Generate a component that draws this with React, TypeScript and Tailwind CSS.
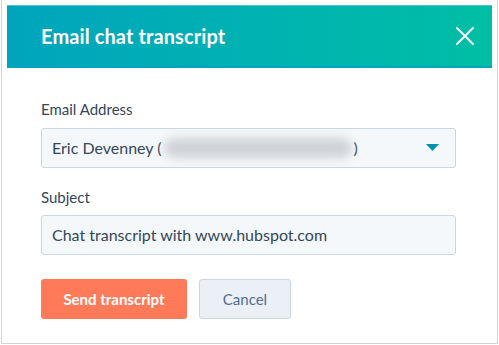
import { X } from 'lucide-react'

const font = { fontFamily: 'Lato, "Open Sans", sans-serif' }

function Caret() {
  return (
    <svg width="13" height="7" viewBox="0 0 13 7" className="text-[#0091ae]">
      <path d="M0 0h13L6.5 7z" fill="currentColor" />
    </svg>
  )
}

export default function App() {
  return (
    <div className="h-[345px] w-[499px] bg-white" style={font}>
      <div className="ml-px h-[344px] w-[497px] border-x border-b border-[#d3d3d3] px-[5px] pt-[5px]">
        <header className="flex h-[63px] items-center justify-between border-t border-[#4fc3d3] border-b-2 border-b-[#00a4bd] bg-gradient-to-r from-[#00a5bd] to-[#00bea5] pl-[34px] pr-[11px] text-white">
          <h1 className="text-[20px] font-bold tracking-[0.1px]">Email chat transcript</h1>
          <X size={32} strokeWidth={1.4} />
        </header>

        <div className="px-[34px] pt-[30px]">
          <label className="block text-[15px] text-[#33475b]">Email Address</label>
          <div className="mt-[7px] flex h-[40px] w-[415px] items-center justify-between rounded-[3px] border border-[#cbd6e2] bg-[#f5f8fa] pl-[10px] pr-[16px] text-[16px] text-[#33475b]">
            <span className="flex items-center">
              Eric Devenney (
              <span className="mx-[2px] h-[20px] w-[188px] rounded-full bg-[#cfd3d8] blur-[5px]" />
              )
            </span>
            <Caret />
          </div>

          <label className="mt-[18px] block text-[15px] text-[#33475b]">Subject</label>
          <div className="mt-[7px] flex h-[40px] w-[415px] items-center rounded-[3px] border border-[#cbd6e2] bg-[#f5f8fa] pl-[10px] text-[16px] text-[#33475b]">
            Chat transcript with www.hubspot.com
          </div>

          <div className="mt-[24px] flex gap-[12px]">
            <button className="h-[40px] w-[146px] rounded-[3px] bg-[#ff7a59] text-[15px] font-bold text-white">
              Send transcript
            </button>
            <button className="h-[40px] w-[92px] rounded-[3px] border border-[#cbd6e2] bg-[#eaf0f6] text-[15px] text-[#506e91]">
              Cancel
            </button>
          </div>
        </div>
      </div>
    </div>
  )
}
